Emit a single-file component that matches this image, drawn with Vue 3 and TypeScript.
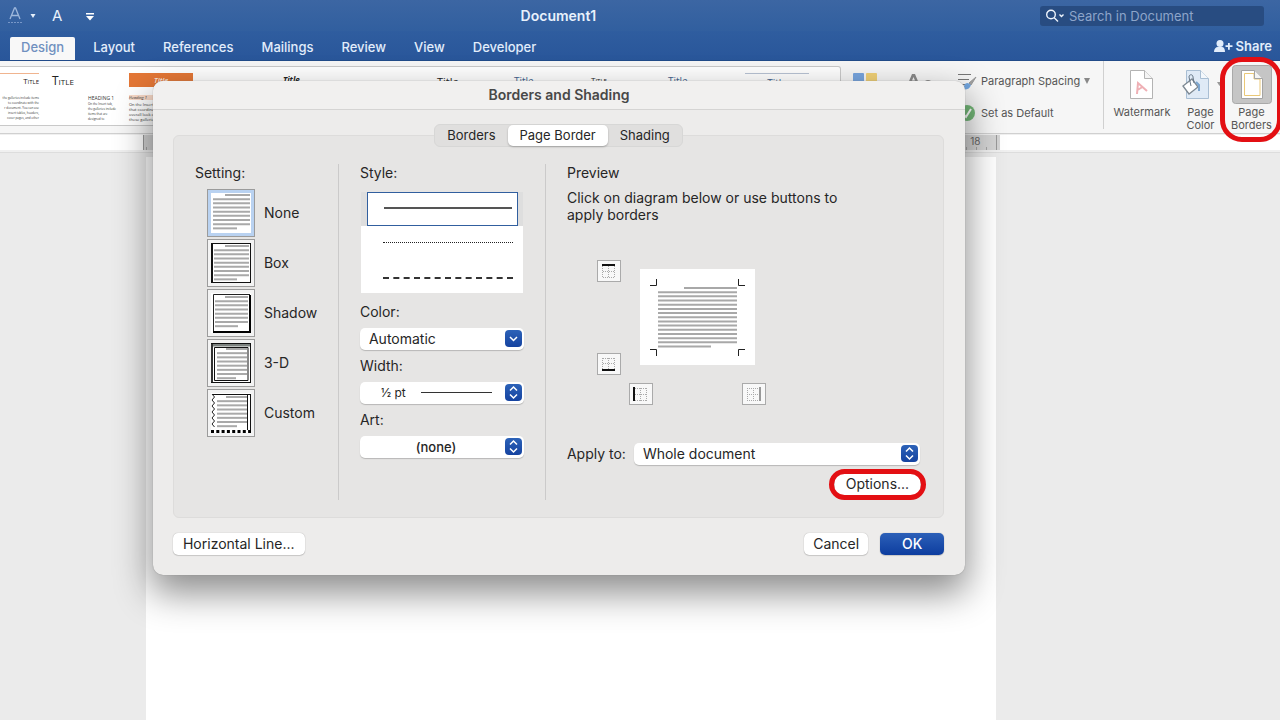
<script setup lang="ts">
import { ref } from 'vue'

interface Setting {
  name: string
  left: number
  right: number
  indent: number
  end: number
  top: number
  lines: number[]
}

const lines = (n: number) => Array.from({ length: n }, (_, i) => i)

const tabs = ['Design', 'Layout', 'References', 'Mailings', 'Review', 'View', 'Developer']
const settings: Setting[] = [
  { name: 'None', left: 6, right: 43, indent: 18, end: 30, top: 6, lines: lines(9) },
  { name: 'Box', left: 7, right: 42, indent: 18, end: 30, top: 7, lines: lines(9) },
  { name: 'Shadow', left: 8, right: 41, indent: 18, end: 31, top: 8, lines: lines(8) },
  { name: '3-D', left: 10, right: 40, indent: 19, end: 29, top: 10, lines: lines(8) },
  { name: 'Custom', left: 10, right: 40, indent: 19, end: 30, top: 8, lines: lines(8) }
]
const segments = ['Borders', 'Page Border', 'Shading']
const activeTab = ref('Design')
const setting = ref('None')
const segment = ref('Page Border')
const search = ref('')
const color = ref('Automatic')
const lineWidth = ref('½ pt')
const art = ref('(none)')
const applyTo = ref('Whole document')
const previewRows = lines(15)
const ticks = lines(86)

const settingLine = (s: Setting, r: number) => {
  const last = r === s.lines.length - 1
  return `M${r === 0 ? s.indent : s.left} ${s.top + r * 4.17}H${last ? s.end : s.right}`
}
</script>

<template>
  <div class="app">
    <header class="titlebar">
      <div class="quick">
        <button class="bare" aria-label="Text effects">
          <svg width="36" height="20" viewBox="0 0 36 20" fill="none">
            <path d="M3 13 7.500 2h1L13 13M5 9.500h6" stroke="#9db7dc" stroke-width="1.300" />
            <path d="M1 16.500h15" stroke="#7797c8" stroke-dasharray="2 1" />
            <path d="M23.500 8h5l-2.500 4z" fill="#e6effa" />
          </svg>
        </button>
        <button class="bare font-a" aria-label="Font">A</button>
        <button class="bare" aria-label="Customize toolbar">
          <svg width="10" height="20" viewBox="0 0 10 20"><path d="M1 7h8v1.500H1zM1 10h8l-4 4.500z" fill="#fff" /></svg>
        </button>
      </div>
      <h1>Document1</h1>
      <label class="search">
        <svg width="22" height="16" viewBox="0 0 22 16" fill="none" stroke="#eef4fc" stroke-width="1.400">
          <circle cx="6" cy="6.500" r="4.300" /><path d="m9 9.500 4 4M14.500 6.500l2 2 2-2" />
        </svg>
        <input v-model="search" type="text" placeholder="Search in Document" aria-label="Search in Document" />
      </label>
    </header>

    <nav class="tabs">
      <button v-for="t in tabs" :key="t" :class="['tab', { active: t === activeTab }]" @click="activeTab = t">{{ t }}</button>
      <button class="share">
        <svg width="19" height="14" viewBox="0 0 19 14" fill="#e2edfb">
          <circle cx="6" cy="4.500" r="3.500" /><path d="M0 13c0-3 1.500-5 4-5h4c2 0 3 2 3 5zM14 4h1.800v2.300H18.500v1.800h-2.700v2.600H14V8.100h-2.500V6.300H14z" />
        </svg>
        <span>Share</span>
      </button>
    </nav>

    <section class="ribbon">
      <div class="gallery">
        <div class="thumbs">
          <div class="thumb first">
            <div class="t-title right">Title</div>
            <p class="tiny wide">the galleries include items<br />to coordinate with the<br />r document. You can use<br />insert tables, headers,<br />cover pages, and other</p>
          </div>
          <div class="thumb">
            <div class="t-title caps">Title</div>
            <p class="tiny inset"><span class="head">Heading 1</span><br />On the Insert tab,<br />the galleries include<br />items that are<br />designed to</p>
          </div>
          <div class="thumb">
            <div class="t-title orange">Title</div>
            <p class="tiny"><span class="peach">Heading 1</span>On the Insert tab,<br />that coordinate with<br />overall look of your<br />these galleries to</p>
          </div>
          <div class="thumb"></div>
          <div class="thumb"><div class="t-title ital">Title</div></div>
          <div class="thumb"></div>
          <div class="thumb"><div class="t-title large">Title</div></div>
          <div class="thumb"><div class="t-title blue">Title</div></div>
          <div class="thumb"><div class="t-title small">Title</div></div>
          <div class="thumb"><div class="t-title blue">Title</div></div>
          <div class="thumb ruled"><div class="t-title blue mid">Title</div></div>
        </div>
      </div>
      <div class="themes">
        <svg width="24" height="24" viewBox="0 0 24 24"><rect width="11" height="11" rx="1" fill="#77a5df" /><rect x="13" width="11" height="11" rx="1" fill="#f1d177" /><rect y="13" width="11" height="11" fill="#8abb78" /><rect x="13" y="13" width="11" height="11" fill="#e4895d" /></svg>
        <svg width="26" height="24" viewBox="0 0 26 24"><path d="M0 13 5 1h3l5 12h-3L9 10H4l-1 3zM5 7.500h3L6.500 4z" fill="#8a8a8a" /><path d="M18 8q3-2 6 0z" fill="#888" /></svg>
      </div>
      <div class="paragraph">
        <button class="bare row-btn">
          <svg width="20" height="20" viewBox="0 0 20 20" fill="none"><path d="M1 3.500h13M1 8.500h11M1 13.500h8" stroke="#777" /><path d="m19 6-7 6 2 2z" fill="#a2a2a2" stroke="#999" /><path d="M11 12q-4 0-4 4-1 2-3 2 8 2 10-4z" fill="#72a6df" /></svg>
          <span>Paragraph Spacing</span>
          <svg width="6" height="6" viewBox="0 0 6 6"><path d="M0 0h6L3 6z" fill="#888" /></svg>
        </button>
        <button class="bare row-btn">
          <svg width="20" height="20" viewBox="0 0 20 20"><circle cx="10" cy="10" r="8" fill="#74b878" /><path d="m6 11 3 3 5-8" fill="none" stroke="#fff" stroke-width="2" /></svg>
          <span>Set as Default</span>
        </button>
      </div>
      <div class="page-tools">
        <button class="bare tool">
          <svg width="40" height="40" viewBox="0 0 40 40" fill="none"><path d="M8.500 5.500h14l8 8v20h-22z" fill="#fff" stroke="#b3b3b3" /><path d="M22.500 5.500v8h8" fill="#f4f4f4" stroke="#b3b3b3" /><path d="m15 29 1-11 9 8M15.500 25l5-3" stroke="#efb0b5" stroke-width="2" /></svg>
          <span>Watermark</span>
        </button>
        <button class="bare tool">
          <svg width="40" height="40" viewBox="0 0 40 40" fill="none"><path d="M5.500 5.500h14l8 8v20h-22z" fill="#dfeaf6" stroke="#a9bed3" /><path d="M19.500 5.500v8h8" fill="#f4f8fc" stroke="#a9bed3" /><path d="m2 21 9-7 6 8-9 7z" fill="#fff" stroke="#7e8993" stroke-width="1.300" /><path d="m10 21-2-9c0-3 4-3 4 0l1 6" stroke="#687888" /><path d="m15 17 3 3v6" stroke="#7ca5ce" stroke-width="2" /><path d="M36 17h5l-2.500 4z" fill="#999" /></svg>
          <span>Page<br />Color</span>
        </button>
        <button class="bare tool selected">
          <svg width="40" height="40" viewBox="0 0 40 40" fill="none"><rect x=".5" y=".5" width="39" height="38" rx="3" fill="#c5c5c5" stroke="#a9a9a9" /><path d="M9.500 5.500h13l8 8v20h-21z" fill="#fff" stroke="#a4a4a4" /><path d="M12.500 8.500h9.500V14h6v16.500H12.500z" stroke="#eac878" /><path d="M22.500 5.500v8h8" fill="#f4f4f4" stroke="#a4a4a4" /></svg>
          <span>Page<br />Borders</span>
        </button>
      </div>
    </section>

    <div class="ruler">
      <div class="ruler-scale">
        <svg width="860" height="15" viewBox="0 0 860 15"><path v-for="i in ticks" :key="i" :d="`M${i * 10 + 3.5} 12v3`" stroke="#a5a5a5" /><path d="M.5 0v15M853.500 0v15" stroke="#999" /></svg>
        <span class="mark">18</span>
      </div>
    </div>

    <main class="workspace"><div class="paper"></div></main>

    <section class="dialog" role="dialog" aria-labelledby="dialog-title">
      <h2 id="dialog-title">Borders and Shading</h2>
      <div class="dialog-body">
        <div class="segmented">
          <button v-for="s in segments" :key="s" :class="{ on: s === segment }" @click="segment = s">{{ s }}</button>
        </div>
        <div class="panel">
          <div class="col">
            <div class="caption">Setting:</div>
            <div class="settings">
              <button v-for="s in settings" :key="s.name" class="bare setting" @click="setting = s.name">
                <svg width="48" height="48" viewBox="0 0 48 48" fill="none">
                  <rect x=".5" y=".5" width="47" height="47" :fill="s.name === setting ? '#b9d2f1' : '#f3f3f3'" stroke="#9b9b9b" />
                  <rect x="4" y="4" width="40" height="40" fill="#fff" />
                  <path v-for="r in s.lines" :key="r" :d="settingLine(s, r)" stroke="#a9a9a9" stroke-width="2" />
                  <g v-if="s.name === 'Box'" stroke="#111"><path d="M4 4.500h40M4 43.500h40M43.500 4v40" /><path d="M5 4v40" stroke-width="2" /></g>
                  <g v-if="s.name === 'Shadow'"><path d="M6.500 43V5.500H43" stroke="#222" /><path d="M43 6v37H6" stroke="#000" stroke-width="2" /></g>
                  <g v-if="s.name === '3-D'"><path d="M4 6h40" stroke="#7c827f" stroke-width="3" /><path d="M5 4v40" stroke="#333" stroke-width="2" /><path d="M4 4.500h40M43.500 4v40M4 43.500h40" stroke="#111" /><path d="M7.500 8.500h33.500v33h-33.500z" stroke="#111" /></g>
                  <g v-if="s.name === 'Custom'"><path d="M5 5.500h39M40.500 5v36M43.500 5v36" stroke="#111" /><path d="m5 5 2.500 3L5 11l2.500 3L5 17l2.500 3L5 23l2.500 3L5 29l2.500 3L5 35l2.500 3" stroke="#222" /><path d="M4 42.500h40" stroke="#000" stroke-width="3" stroke-dasharray="3 2.300" /></g>
                </svg>
                <span>{{ s.name }}</span>
              </button>
            </div>
          </div>

          <div class="col divided">
            <div class="caption">Style:</div>
            <div class="styles" role="listbox" aria-label="Style">
              <button class="bare style chosen" role="option" aria-selected="true" aria-label="Solid"><span class="line solid"></span></button>
              <button class="bare style" role="option" aria-selected="false" aria-label="Dotted"><span class="line dotted"></span></button>
              <button class="bare style" role="option" aria-selected="false" aria-label="Dashed"><span class="line dashed"></span></button>
            </div>
            <div class="field">
              <label for="color">Color:</label>
              <div class="select">
                <select id="color" v-model="color"><option>Automatic</option></select>
                <svg class="knob" width="17" height="17" viewBox="0 0 17 17"><path d="m5 7 3.500 3.500L12 7" /></svg>
              </div>
            </div>
            <div class="field">
              <label for="width">Width:</label>
              <div class="select width">
                <select id="width" v-model="lineWidth"><option>½ pt</option></select>
                <span class="sample"></span>
                <svg class="knob" width="17" height="17" viewBox="0 0 17 17"><path d="m5 6.500 3.500-3.500L12 6.500M5 10.500 8.500 14l3.500-3.500" /></svg>
              </div>
            </div>
            <div class="field">
              <label for="art">Art:</label>
              <div class="select art">
                <select id="art" v-model="art"><option>(none)</option></select>
                <svg class="knob" width="17" height="17" viewBox="0 0 17 17"><path d="m5 6.500 3.500-3.500L12 6.500M5 10.500 8.500 14l3.500-3.500" /></svg>
              </div>
            </div>
          </div>

          <div class="col divided preview">
            <div class="caption">Preview</div>
            <p class="hint">Click on diagram below or use buttons to apply borders</p>
            <div class="diagram">
              <div class="diagram-main">
                <div class="edges">
                  <button class="edge" aria-label="Top border"><svg width="22" height="20" viewBox="0 0 22 20"><path class="dots" d="M4.500 5v11M10.500 5v11M16.500 5v11M5 10.500h12M5 16.500h12" /><path d="M4 4h13" stroke="#111" stroke-width="2" /></svg></button>
                  <button class="edge" aria-label="Bottom border"><svg width="22" height="20" viewBox="0 0 22 20"><path class="dots" d="M4.500 4v11M10.500 4v11M16.500 4v11M5 4.500h12M5 9.500h12" /><path d="M4 16h13" stroke="#111" stroke-width="2" /></svg></button>
                </div>
                <svg class="canvas" width="115" height="96" viewBox="0 0 115 96" fill="none">
                  <rect width="115" height="96" fill="#fff" />
                  <path v-for="r in previewRows" :key="r" :d="`M${r === 0 ? 44 : 18} ${19 + r * 4.18}H${r === 14 ? 71 : 97}`" stroke="#a8a8a8" stroke-width="2" />
                  <path d="M10 16.500h6.500V10M105 16.500h-6.500V10M10 80.500h6.500V87M105 80.500h-6.500V87" stroke="#222" />
                </svg>
              </div>
              <div class="sides">
                <button class="edge" aria-label="Left border"><svg width="22" height="20" viewBox="0 0 22 20"><path class="dots" d="M5 4.500h12M5 10.500h12M5 16.500h12M10.500 4v13M16.500 4v13" /><path d="M4 3v14" stroke="#111" stroke-width="2" /></svg></button>
                <button class="edge" aria-label="Right border"><svg width="22" height="20" viewBox="0 0 22 20"><path class="dots" d="M4 4.500h12M4 10.500h12M4 16.500h12M4.500 4v13M10.500 4v13" /><path d="M17 3v14" stroke="#999" stroke-width="2" /></svg></button>
              </div>
            </div>
            <div class="apply">
              <label for="apply">Apply to:</label>
              <div class="select">
                <select id="apply" v-model="applyTo"><option>Whole document</option></select>
                <svg class="knob" width="17" height="17" viewBox="0 0 17 17"><path d="m5 6.500 3.500-3.500L12 6.500M5 10.500 8.500 14l3.500-3.500" /></svg>
              </div>
            </div>
            <button class="btn options">Options...</button>
          </div>
        </div>
        <footer>
          <button class="btn">Horizontal Line...</button>
          <button class="btn cancel">Cancel</button>
          <button class="btn primary">OK</button>
        </footer>
      </div>
    </section>
  </div>
</template>

<style>
html, body { margin: 0; overflow-x: hidden; }
</style>

<style scoped>
* { box-sizing: border-box; }
.app { position: relative; display: flex; flex-direction: column; min-height: 100vh; overflow: hidden; background: #ececec; color: #262626; font: 13px/18px Inter, "Liberation Sans", sans-serif; }
button, input, select { font: inherit; color: inherit; }
.bare { border: 0; padding: 0; background: none; }
svg { display: block; flex: none; }
h1, h2, p { margin: 0; }

.titlebar { display: grid; grid-template-columns: 10fr auto 13fr; align-items: center; height: 31px; padding: 0 16px 0 7px; background: linear-gradient(#3c66a3, #315f9f); color: #e8f1fc; }
.quick { display: flex; align-items: center; }
.quick .font-a { margin: 0 23px 0 9px; font-size: 15px; }
h1 { font-size: 14px; line-height: 18px; font-weight: 600; }
.search { display: flex; align-items: center; justify-self: end; width: 224px; height: 20px; padding-left: 5px; border-radius: 3px; background: #284c81; }
.search input { flex: 1; min-width: 0; padding: 0 0 0 2px; border: 0; outline: 0; background: none; color: #fff; }
.search input::placeholder { color: #8da5ca; opacity: 1; }

.tabs { display: flex; align-items: flex-end; height: 30px; padding: 0 8px 0 10px; background: linear-gradient(#2f5d9f, #29569a); border-bottom: 1px solid #214b89; color: #e2edfb; }
.tab { height: 23px; padding: 0 11px 3px; margin-right: 6px; border: 0; border-radius: 2px 2px 0 0; background: none; font-weight: 500; line-height: 20px; }
.tab.active { margin-right: 7px; background: #f8f8f8; color: #7090bf; }
.share { display: flex; align-items: center; gap: 3px; height: 28px; margin-left: auto; padding: 0; border: 0; background: none; font-weight: 600; }

.ribbon { display: flex; height: 73px; background: #f6f6f6; border-bottom: 1px solid #d0d0d0; font-size: 11px; color: #555; }
.gallery { flex: 1; min-width: 0; height: 60px; margin-top: 5px; overflow: hidden; border: 1px solid #c9c9c9; border-left: 0; border-radius: 0 3px 3px 0; background: #fff; }
.thumbs { display: flex; gap: 13px; }
.thumb { flex: none; width: 64px; height: 56px; padding-top: 6px; font-family: "Open Sans", sans-serif; }
.thumb.first { width: 39px; }
.t-title { height: 23px; font-size: 8px; line-height: 14px; color: #222; }
.right { text-align: right; font-variant: small-caps; border-top: 1px solid #f0b48f; }
.caps { font-size: 12px; line-height: 16px; font-variant: small-caps; }
.orange { height: 14px; margin-bottom: 8px; background: #e47736; color: #fff; text-align: center; font-style: italic; }
.ital { font-weight: 700; font-style: italic; }
.large { font-size: 11px; line-height: 18px; }
.blue { font-size: 10px; line-height: 17px; color: #45638e; }
.small { font-variant: small-caps; }
.ruled .mid { text-align: center; line-height: 19px; border-top: 1px solid #b9c3d4; }
.tiny { font-size: 4px; line-height: 5px; color: #333; white-space: nowrap; }
.wide { font-size: 3px; text-align: right; }
.inset { padding-left: 36px; font-size: 3px; }
.head { font-size: 5px; text-transform: uppercase; }
.peach { display: block; background: #f8d9c7; font-style: italic; margin-bottom: 2px; }
.themes { display: flex; gap: 30px; padding: 12px 0 0 12px; width: 116px; }
.paragraph { display: flex; flex-direction: column; width: 147px; padding-top: 9px; gap: 11px; border-right: 1px solid #d0d0d0; height: 68px; }
.row-btn { display: flex; align-items: center; gap: 4px; height: 21px; white-space: nowrap; }
.page-tools { display: flex; width: 176px; padding: 4px 0 0 5px; }
.tool { position: relative; display: flex; flex: none; flex-direction: column; align-items: center; justify-content: flex-start; height: 68px; width: 66px; line-height: 13px; gap: 1px; }
.tool:nth-child(2), .tool:nth-child(3) { width: 51px; }
.selected::after { content: ""; position: absolute; inset: -8px -5px -9px -6px; border: 5px solid #e30f13; border-radius: 22px; z-index: 1; }

.ruler { flex: none; height: 18px; padding: 1px 0 2px; background: #f0f0f0; }
.ruler-scale { position: relative; height: 15px; padding-left: 11.200%; background: linear-gradient(90deg, #fff 11.200%, #d4d4d4 11.200%, #d4d4d4 78.100%, #fff 78.100%); }
.mark { position: absolute; left: 75.800%; top: 0; font-size: 10px; line-height: 12px; color: #666; }

.workspace { flex: 1; display: flex; background: #ebebeb; border-top: 1px solid #ddd; }
.paper { flex: 1; margin: 4px 22.200% 0 11.400%; background: #fff; }

.dialog { position: absolute; top: 81px; left: 11.950%; right: 24.600%; border-radius: 10px; background: #edeceb; box-shadow: 0 0 1px #777, 0 16px 36px 2px rgba(0, 0, 0, 0.45); font-size: 14px; }
h2 { height: 29px; border-bottom: 1px solid #d5d4d3; border-radius: 10px 10px 0 0; background: #f1f0ef; text-align: center; font-size: 14px; line-height: 28px; font-weight: 600; color: #484848; }
.dialog-body { display: flex; flex-direction: column; padding: 14px 21px 20px 20px; }
.segmented { display: flex; align-self: center; position: relative; height: 23px; margin-bottom: -12px; border: 1px solid #d7d7d6; border-radius: 6px; background: #e0dfde; font-size: 13px; }
.segmented button { padding: 0 12px; border: 0; border-radius: 5px; background: none; line-height: 21px; }
.segmented .on { background: #fff; box-shadow: 0 1px 2px #0004; }
.panel { display: grid; grid-template-columns: 164px 207px 1fr; padding: 28px 0 17px; border: 1px solid #dddcdb; border-radius: 6px; background: #e6e5e4; }
.col { min-height: 336px; padding: 0 21px; }
.divided { border-left: 1px solid #cbcaca; }
.settings { display: flex; flex-direction: column; gap: 2px; margin-top: 7px; padding-left: 12px; }
.setting { display: flex; align-items: center; gap: 9px; }
.styles { height: 101px; margin: 10px 1px 0; overflow: hidden; background: #fff; }
.style { display: block; width: 100%; height: 35px; padding: 0 10px 4px 22px; }
.chosen { height: 34px; padding: 0 5px 0 6px; margin-bottom: 1px; background: #dedede; }
.line { display: block; }
.chosen .line { height: 34px; padding: 14px 5px 0 16px; border: 1px solid #315f9f; background: #fff; }
.line.solid::after { content: ""; display: block; border-top: 2px solid #555; }
.dotted { border-top: 1px dotted #222; }
.dashed { border-top: 2px dashed #333; }
.field { margin-top: 10px; }
.field + .field { margin-top: 7px; }
.field label { display: block; margin-bottom: 7px; }
.select { position: relative; flex: 1; height: 22px; border-radius: 5px; background: #fff; box-shadow: 0 1px 1px #0003; }
.select select { display: block; appearance: none; width: 100%; height: 22px; padding: 0 24px 0 9px; border: 0; border-radius: 5px; background: none; }
.width select { padding-left: 21px; font-size: 12px; }
.art select { text-align: center; padding-left: 12px; font-size: 13px; font-weight: 500; }
.knob { position: absolute; top: 2px; right: 2px; border-radius: 4px; background: linear-gradient(#2c62b8, #1543a0); fill: none; stroke: #fff; stroke-width: 1.500px; pointer-events: none; }
.sample { position: absolute; left: 61px; right: 32px; top: 10px; height: 1px; background: #333; }
.hint { width: 280px; margin-top: 7px; line-height: 17px; }
.diagram { width: 169px; margin: 37px 0 0 30px; }
.diagram-main { display: flex; gap: 19px; }
.edges { display: flex; flex-direction: column; justify-content: space-between; height: 115px; }
.edge { width: 24px; height: 22px; padding: 0; border: 1px solid #aaa; background: #f8f8f8; }
.dots { fill: none; stroke: #aaa; stroke-dasharray: 1 1; }
.canvas { margin-top: 9px; }
.sides { display: flex; justify-content: space-between; margin-top: 8px; padding-left: 32px; }
.apply { display: flex; align-items: center; gap: 8px; margin: 38px 2px 0 0; }
.preview { display: flex; flex-direction: column; }
.btn { height: 22px; padding: 0 10px; border: 0; border-radius: 5px; background: #fff; box-shadow: 0 0 1px #0005, 0 1px 1px #0002; line-height: 20px; }
.options { position: relative; align-self: flex-end; margin: 8px 2px 0 0; padding: 0 11px; }
.options::after { content: ""; position: absolute; inset: -4px -6px -5px -6px; border: 5px solid #e30f13; border-radius: 16px; }
footer { display: flex; margin-top: 15px; }
.cancel { margin: 0 12px 0 auto; padding: 0 9px; }
.primary { width: 64px; background: linear-gradient(#2c60b8, #0d3d9f); color: #fff; font-weight: 500; }
</style>
